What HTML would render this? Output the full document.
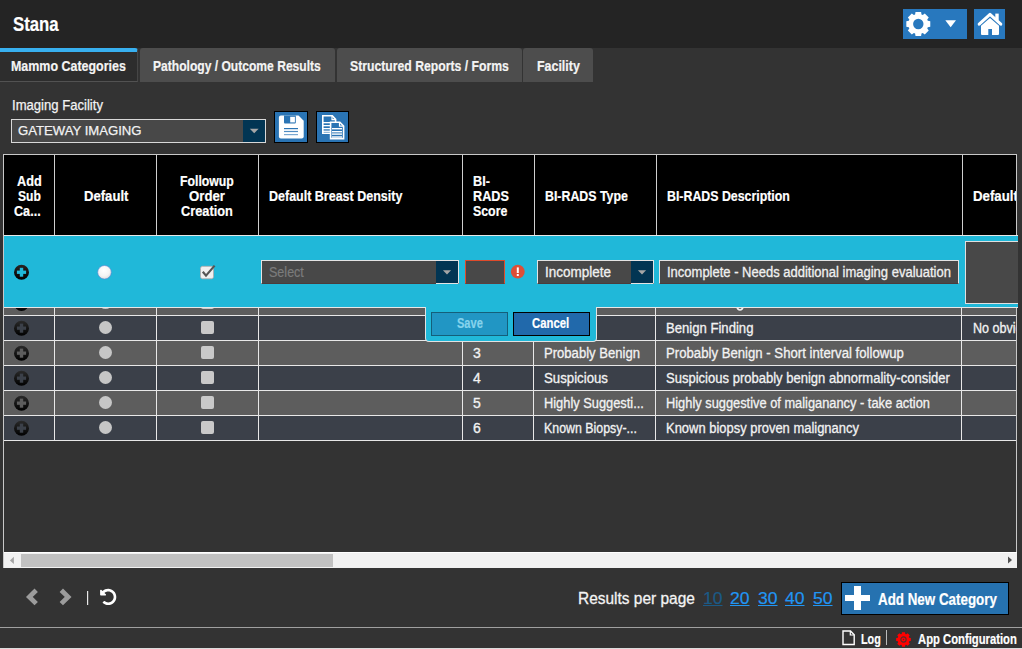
<!DOCTYPE html>
<html><head><meta charset="utf-8">
<style>
*{margin:0;padding:0;box-sizing:border-box}
html,body{width:1022px;height:649px;overflow:hidden;background:#333333;font-family:"Liberation Sans",sans-serif}
.a{position:absolute}
.t{position:absolute;white-space:nowrap;line-height:1;transform-origin:0 0;font-family:"Liberation Sans",sans-serif}
.hl{position:absolute;height:1px;background:#e8e8e8}
.vl{position:absolute;width:1px;background:#e8e8e8}
.radio{position:absolute;width:13px;height:13px;border-radius:50%;background:#c6c6c6}
.chk{position:absolute;width:13px;height:13px;border-radius:2px;background:#c9c9c9}
.plus{position:absolute;width:15px;height:15px}
</style></head><body>
<!-- header -->
<div class="a" style="left:0;top:0;width:1022px;height:48px;background:#242424"></div>
<div class="a" style="left:903px;top:9px;width:64px;height:30px;background:#2878be"></div>
<svg class="a" style="left:903px;top:9px" width="64" height="30" viewBox="0 0 64 30">
  <path fill="#fff" fill-rule="evenodd" d="M12.10,5.53 L12.50,3.02 L18.10,3.02 L18.50,5.53 L19.74,6.04 L21.79,4.55 L25.75,8.51 L24.26,10.56 L24.77,11.80 L27.28,12.20 L27.28,17.80 L24.77,18.20 L24.26,19.44 L25.75,21.49 L21.79,25.45 L19.74,23.96 L18.50,24.47 L18.10,26.98 L12.50,26.98 L12.10,24.47 L10.86,23.96 L8.81,25.45 L4.85,21.49 L6.34,19.44 L5.83,18.20 L3.32,17.80 L3.32,12.20 L5.83,11.80 L6.34,10.56 L4.85,8.51 L8.81,4.55 L10.86,6.04 Z M15.30,9.80 A5.2,5.2 0 1 0 15.30,20.20 A5.2,5.2 0 1 0 15.30,9.80 Z"/>
  <path d="M42.3,11.2 L53,11.2 L47.65,18.3 Z" fill="#fff"/>
</svg>
<div class="a" style="left:974px;top:9px;width:31px;height:30px;background:#2878be"></div>
<svg class="a" style="left:974px;top:9px" width="31" height="30" viewBox="0 0 31 30">
  <path d="M5.2,15.2 L16,5.4 L26.8,15.2" fill="none" stroke="#fff" stroke-width="3" stroke-linecap="round" stroke-linejoin="round"/>
  <rect x="21.3" y="4.6" width="3.4" height="6.5" fill="#fff"/>
  <path d="M7,16.8 L16,8.9 L25,16.8 L25,25 Q25,26 24,26 L18,26 L18,20 L14.3,20 L14.3,26 L8,26 Q7,26 7,25 Z" fill="#fff"/>
</svg>

<!-- tabs -->
<div class="a" style="left:0;top:48px;width:138px;height:34px;background:#2d2d2d;border-top:4px solid #38b0f0;border-right:1px solid #464646;border-bottom:1px solid #525252;border-radius:0 3px 0 0"></div>
<div class="a" style="left:140px;top:48px;width:195px;height:34px;background:#4d4d4d;border-radius:3px 3px 0 0"></div>
<div class="a" style="left:337px;top:48px;width:185px;height:34px;background:#4d4d4d;border-radius:3px 3px 0 0"></div>
<div class="a" style="left:523px;top:48px;width:70px;height:34px;background:#4d4d4d;border-radius:3px 3px 0 0"></div>

<!-- facility select -->
<div class="a" style="left:11px;top:119px;width:255px;height:24px;background:#484848;border:1px solid #d8d8d8"></div>
<div class="a" style="left:243px;top:120px;width:22px;height:22px;background:#023553"></div>
<svg class="a" style="left:243px;top:120px" width="22" height="22"><path d="M6.8,8.8 L15.6,8.8 L11.2,13.3 Z" fill="#a6a6a6"/></svg>
<!-- save btn -->
<div class="a" style="left:274px;top:111px;width:34px;height:32px;background:#2a74b4;border:1px solid #000"></div>
<svg class="a" style="left:274px;top:111px" width="34" height="32" viewBox="0 0 34 32">
  <path d="M6.9,4.6 L24.5,4.6 L29.7,9.8 L29.7,25.5 Q29.7,27.5 27.7,27.5 L6.9,27.5 Q4.9,27.5 4.9,25.5 L4.9,6.6 Q4.9,4.6 6.9,4.6 Z" fill="#fff"/>
  <path d="M10,4.6 L21.8,4.6 L21.8,11.5 Q21.8,12.5 20.8,12.5 L11,12.5 Q10,12.5 10,11.5 Z" fill="#2a74b4"/>
  <rect x="16.2" y="5.8" width="4.7" height="5.6" fill="#fff"/>
  <rect x="10" y="17" width="14" height="1.2" fill="#2a74b4"/>
  <rect x="10" y="19.9" width="14" height="1.2" fill="#4f8cc2"/>
  <rect x="10" y="23" width="14" height="1.2" fill="#7aa8d2"/>
</svg>
<!-- copy btn -->
<div class="a" style="left:316px;top:111px;width:33px;height:32px;background:#2a74b4;border:1px solid #000"></div>
<svg class="a" style="left:316px;top:111px" width="33" height="32" viewBox="0 0 33 32">
  <path d="M6.8,4.8 L16.3,4.8 L19.6,8.4 L19.6,22.3 L6.8,22.3 Z" fill="#2a74b4" stroke="#fff" stroke-width="1.6"/>
  <path d="M16,4.8 L16,8.6 L19.6,8.6" fill="none" stroke="#fff" stroke-width="1.2"/>
  <rect x="7" y="11" width="7" height="1.3" fill="#fff"/>
  <rect x="7" y="14" width="7" height="1.3" fill="#fff"/>
  <rect x="7" y="17" width="7" height="1.3" fill="#fff"/>
  <rect x="7" y="19.6" width="7" height="1.3" fill="#fff"/>
  <path d="M14.6,11.2 L23.8,11.2 L27.6,15 L27.6,27.6 L14.6,27.6 Z" fill="#2a74b4" stroke="#fff" stroke-width="1.6"/>
  <path d="M23.5,11.2 L23.5,15.2 L27.6,15.2" fill="none" stroke="#fff" stroke-width="1.2"/>
  <rect x="16" y="17" width="10" height="1.4" fill="#fff"/>
  <rect x="16" y="20" width="10" height="1.4" fill="#fff"/>
  <rect x="16" y="22.4" width="10" height="1.4" fill="#fff"/>
  <rect x="16" y="25.3" width="10" height="1.4" fill="#fff"/>
</svg>

<!-- table container -->
<div class="a" style="left:3px;top:154px;width:1014px;height:414px;border:1px solid #c8c8c8;background:#333"></div>
<div class="a" style="left:4px;top:155px;width:1012px;height:80px;background:#000"></div>
<div class="hl" style="left:4px;top:235px;width:1014px"></div>
<!-- header col lines -->
<div class="vl" style="left:54px;top:155px;height:80px;background:#cfcfcf"></div>
<div class="vl" style="left:156px;top:155px;height:80px;background:#cfcfcf"></div>
<div class="vl" style="left:258px;top:155px;height:80px;background:#cfcfcf"></div>
<div class="vl" style="left:462px;top:155px;height:80px;background:#cfcfcf"></div>
<div class="vl" style="left:534px;top:155px;height:80px;background:#cfcfcf"></div>
<div class="vl" style="left:656px;top:155px;height:80px;background:#cfcfcf"></div>
<div class="vl" style="left:962px;top:155px;height:80px;background:#cfcfcf"></div>

<!-- body rows -->
<div class="a" style="left:4px;top:308px;width:1012px;height:7px;background:#5d5d5d"></div>
<div class="a" style="left:4px;top:316px;width:1012px;height:24px;background:#3b4049"></div>
<div class="a" style="left:4px;top:341px;width:1012px;height:24px;background:#5d5d5d"></div>
<div class="a" style="left:4px;top:366px;width:1012px;height:24px;background:#3b4049"></div>
<div class="a" style="left:4px;top:391px;width:1012px;height:24px;background:#5d5d5d"></div>
<div class="a" style="left:4px;top:416px;width:1012px;height:24px;background:#3b4049"></div>

<div class="hl" style="left:4px;top:315px;width:1012px"></div>
<div class="hl" style="left:4px;top:340px;width:1012px"></div>
<div class="hl" style="left:4px;top:365px;width:1012px"></div>
<div class="hl" style="left:4px;top:390px;width:1012px"></div>
<div class="hl" style="left:4px;top:415px;width:1012px"></div>
<div class="hl" style="left:4px;top:440px;width:1012px"></div>
<div class="vl" style="left:54px;top:308px;height:132px"></div>
<div class="vl" style="left:156px;top:308px;height:132px"></div>
<div class="vl" style="left:258px;top:308px;height:132px"></div>
<div class="vl" style="left:462px;top:308px;height:132px"></div>
<div class="vl" style="left:533px;top:308px;height:132px"></div>
<div class="vl" style="left:655px;top:308px;height:132px"></div>
<div class="vl" style="left:961px;top:308px;height:132px"></div>

<!-- row icons -->
<svg class="a" style="left:0;top:300px" width="230" height="145" viewBox="0 300 230 145">
  <defs>
    <linearGradient id="pg" x1="0" y1="0" x2="0" y2="1"><stop offset="0" stop-color="#2a2a2a"/><stop offset="1" stop-color="#000"/></linearGradient>
  </defs>
  <g id="prow">
    <circle cx="21.5" cy="303.5" r="7.5" fill="url(#pg)"/>
  </g>
  <g>
    <circle cx="21.5" cy="328.2" r="7.5" fill="url(#pg)"/>
    <circle cx="21.5" cy="353.2" r="7.5" fill="url(#pg)"/>
    <circle cx="21.5" cy="378.2" r="7.5" fill="url(#pg)"/>
    <circle cx="21.5" cy="403.2" r="7.5" fill="url(#pg)"/>
    <circle cx="21.5" cy="428.2" r="7.5" fill="url(#pg)"/>
  </g>
  <g fill="#5d5d5d">
    <rect x="16.9" y="351.5" width="9.2" height="3.3"/><rect x="19.8" y="348.6" width="3.4" height="9.1"/>
    <rect x="16.9" y="401.5" width="9.2" height="3.3"/><rect x="19.8" y="398.6" width="3.4" height="9.1"/>
  </g>
  <g fill="#3b4049">
    <rect x="16.9" y="326.5" width="9.2" height="3.3"/><rect x="19.8" y="323.6" width="3.4" height="9.1"/>
    <rect x="16.9" y="376.5" width="9.2" height="3.3"/><rect x="19.8" y="373.6" width="3.4" height="9.1"/>
    <rect x="16.9" y="426.5" width="9.2" height="3.3"/><rect x="19.8" y="423.6" width="3.4" height="9.1"/>
  </g>
  <g fill="#c6c6c6">
    <circle cx="105.5" cy="302.6" r="6.5"/>
    <circle cx="105.5" cy="327.5" r="6.5"/>
    <circle cx="105.5" cy="352.5" r="6.5"/>
    <circle cx="105.5" cy="377.5" r="6.5"/>
    <circle cx="105.5" cy="402.5" r="6.5"/>
    <circle cx="105.5" cy="427.5" r="6.5"/>
  </g>
  <g fill="#c9c9c9">
    <rect x="201" y="296" width="13" height="13" rx="2"/>
    <rect x="201" y="321" width="13" height="13" rx="2"/>
    <rect x="201" y="346" width="13" height="13" rx="2"/>
    <rect x="201" y="371" width="13" height="13" rx="2"/>
    <rect x="201" y="396" width="13" height="13" rx="2"/>
    <rect x="201" y="421" width="13" height="13" rx="2"/>
  </g>
</svg>

<svg class="a" style="left:730px;top:304px" width="20" height="10" viewBox="730 304 20 10"><path d="M736.8,306.5 Q737.5,310 740,310 Q742.5,310 743.2,306.5" fill="none" stroke="#f0f0f0" stroke-width="1.5"/></svg>
<!-- edit row -->
<div class="a" style="left:4px;top:236px;width:1014px;height:71px;background:#20b8d9"></div>
<div class="hl" style="left:4px;top:307px;width:1014px"></div>
<svg class="a" style="left:0;top:236px" width="230" height="71" viewBox="0 236 230 71">
  <defs>
    <linearGradient id="pg2" x1="0" y1="0" x2="0" y2="1"><stop offset="0" stop-color="#2a2424"/><stop offset="1" stop-color="#000"/></linearGradient>
    <radialGradient id="rg" cx="0.45" cy="0.35" r="0.7"><stop offset="0" stop-color="#ffffff"/><stop offset="0.6" stop-color="#f4f4f4"/><stop offset="1" stop-color="#d8d8d8"/></radialGradient>
  </defs>
  <circle cx="21.5" cy="272.3" r="7.5" fill="url(#pg2)"/>
  <rect x="16.9" y="270.6" width="9.2" height="3.3" fill="#20b8d9"/><rect x="19.8" y="267.8" width="3.4" height="8.9" fill="#20b8d9"/>
  <circle cx="104.5" cy="272.3" r="6.8" fill="url(#rg)" stroke="#5a7fd0" stroke-width="0.6"/>
  <rect x="200.5" y="266.3" width="13" height="12.5" rx="2" fill="#f0f0f0" stroke="#b0a8a8" stroke-width="0.8"/>
  <path d="M202.8,271.8 L206,275.6 L214.6,265.6" fill="none" stroke="#555" stroke-width="2.2"/>
</svg>
<!-- density select -->
<div class="a" style="left:261px;top:260px;width:198px;height:24px;background:#484848;border:1px solid #e4e4e4;border-bottom-color:#4a3c3c"></div>
<div class="a" style="left:436px;top:261px;width:22px;height:23px;background:#023553;border-bottom:1px solid #e4e4e4"></div>
<svg class="a" style="left:436px;top:261px" width="22" height="22"><path d="M6.9,9.2 L15.1,9.2 L11,13.4 Z" fill="#a6a6a6"/></svg>
<!-- score input -->
<div class="a" style="left:465px;top:260px;width:40px;height:24px;background:#484848;border:1px solid #e04a2a;border-bottom-color:#5a4040"></div>
<svg class="a" style="left:510px;top:264px" width="16" height="16" viewBox="0 0 16 16">
  <circle cx="7.8" cy="7.7" r="6.9" fill="#dc4e37"/>
  <rect x="6.8" y="3.4" width="2" height="5.6" fill="#fff"/>
  <rect x="6.8" y="10" width="2" height="2" fill="#fff"/>
</svg>
<!-- type select -->
<div class="a" style="left:537px;top:260px;width:117px;height:24px;background:#484848;border:1px solid #e4e4e4;border-bottom-color:#4a3c3c"></div>
<div class="a" style="left:631px;top:261px;width:22px;height:23px;background:#023553;border-bottom:1px solid #e4e4e4"></div>
<svg class="a" style="left:631px;top:261px" width="22" height="22"><path d="M6.9,9.2 L15.1,9.2 L11,13.4 Z" fill="#a6a6a6"/></svg>
<!-- desc input -->
<div class="a" style="left:659px;top:260px;width:300px;height:24px;background:#484848;border:1px solid #e4e4e4;border-bottom-color:#4a3c3c"></div>
<!-- default textarea -->
<div class="a" style="left:965px;top:241px;width:53px;height:63px;background:#484848;border:1px solid #e0e0e0;border-right:0"></div>

<!-- popup -->
<div class="a" style="left:425px;top:307px;width:172px;height:35px;background:#20b8d9;border:1px solid #e2e2e2;border-top:0;border-radius:0 0 4px 4px"></div>
<div class="a" style="left:431px;top:312px;width:77px;height:24px;background:#2196c4;border:1px solid #145f7a"></div>
<div class="a" style="left:513px;top:312px;width:77px;height:24px;background:#2169ab;border:1px solid #000"></div>

<!-- scrollbar -->
<div class="a" style="left:4px;top:552px;width:1013px;height:16px;background:#f1f1f1;border-top:1px solid #fff"></div>
<div class="a" style="left:21px;top:554px;width:312px;height:13px;background:#c1c1c1"></div>
<svg class="a" style="left:4px;top:552px" width="16" height="16"><path d="M9.9,4.8 L9.9,12 L5.9,8.4 Z" fill="#a3a3a3"/></svg>
<svg class="a" style="left:1001px;top:552px" width="16" height="16"><path d="M7,4.6 L7,11.6 L11,8.1 Z" fill="#505050"/></svg>

<!-- pagination -->
<svg class="a" style="left:0;top:560px" width="140" height="60" viewBox="0 560 140 60">
  <path d="M36.2,590.2 L29.4,596.9 L36.2,603.6" fill="none" stroke="#9c9c9c" stroke-width="4.8" stroke-linecap="butt" stroke-linejoin="miter"/>
  <path d="M61.3,590.2 L68.1,596.9 L61.3,603.6" fill="none" stroke="#9c9c9c" stroke-width="4.8" stroke-linecap="butt" stroke-linejoin="miter"/>
  <rect x="87" y="591" width="1.2" height="14" fill="#e8e8e8"/>
  <g transform="translate(99.84,588.54) scale(0.03266)">
    <path fill="#fff" d="M255.545 8c-66.269.119-126.438 26.233-170.86 68.685L48.971 40.971C33.851 25.851 8 36.559 8 57.941V192c0 13.255 10.745 24 24 24h134.059c21.382 0 32.09-25.851 16.971-40.971l-41.75-41.75c30.864-28.899 70.801-44.907 113.23-45.273 92.398-.798 170.283 73.977 169.484 169.442C423.236 348.009 349.816 424 256 424c-41.127 0-79.997-14.678-110.63-41.556-4.743-4.161-11.906-3.908-16.368.553L89.34 422.659c-4.872 4.872-4.631 12.815.482 17.433C133.798 479.813 192.074 504 256 504c136.966 0 247.999-111.033 248-247.998C504.001 119.193 392.354 7.755 255.545 8z"/>
  </g>
</svg>
<!-- add new category -->
<div class="a" style="left:841px;top:582px;width:168px;height:33px;background:#2672b0;border:1px solid #000"></div>
<div class="a" style="left:845px;top:594.6px;width:25px;height:6.8px;background:#fff"></div>
<div class="a" style="left:854.1px;top:586px;width:6.8px;height:24px;background:#fff"></div>

<!-- status bar -->
<div class="a" style="left:0;top:648px;width:1022px;height:1px;background:#dcdcdc"></div>
<div class="a" style="left:0;top:627px;width:1022px;height:1px;background:#a0a0a0"></div>
<svg class="a" style="left:840px;top:628px" width="20" height="20" viewBox="840 628 20 20">
  <path d="M843,631 L850.5,631 L854.2,634.7 L854.2,644.5 L843,644.5 Z" fill="none" stroke="#fff" stroke-width="1.4"/>
  <path d="M850.3,631 L850.3,635 L854.2,635" fill="none" stroke="#fff" stroke-width="1.2"/>
</svg>
<div class="a" style="left:886px;top:630px;width:1px;height:15px;background:#bbb"></div>
<svg class="a" style="left:894px;top:629px" width="20" height="20" viewBox="0 0 20 20">
  <path fill="#ff0000" d="M7.70,4.88 L8.00,3.15 L11.00,3.15 L11.30,4.88 L12.20,5.25 L13.64,4.24 L15.76,6.36 L14.75,7.80 L15.12,8.70 L16.85,9.00 L16.85,12.00 L15.12,12.30 L14.75,13.20 L15.76,14.64 L13.64,16.76 L12.20,15.75 L11.30,16.12 L11.00,17.85 L8.00,17.85 L7.70,16.12 L6.80,15.75 L5.36,16.76 L3.24,14.64 L4.25,13.20 L3.88,12.30 L2.15,12.00 L2.15,9.00 L3.88,8.70 L4.25,7.80 L3.24,6.36 L5.36,4.24 L6.80,5.25 Z"/>
  <circle cx="9.5" cy="10.5" r="2.65" fill="none" stroke="#5a2a2a" stroke-width="1.1"/>
  <circle cx="9.5" cy="10.5" r="0.7" fill="#5a2a2a"/>
</svg>

<span class="t" style="left:12.50px;top:14.46px;font-size:20.4px;font-weight:bold;color:#ffffff;transform:scaleX(0.8215);-webkit-text-stroke:0.2px #fff;">Stana</span>
<span class="t" style="left:11.00px;top:58.15px;font-size:15px;font-weight:bold;color:#f4f4f4;transform:scaleX(0.8298);-webkit-text-stroke:0.2px #f4f4f4;">Mammo Categories</span>
<span class="t" style="left:153.30px;top:58.15px;font-size:15px;font-weight:bold;color:#f4f4f4;transform:scaleX(0.8053);-webkit-text-stroke:0.2px #f4f4f4;">Pathology / Outcome Results</span>
<span class="t" style="left:349.50px;top:58.15px;font-size:15px;font-weight:bold;color:#f4f4f4;transform:scaleX(0.8143);-webkit-text-stroke:0.2px #f4f4f4;">Structured Reports / Forms</span>
<span class="t" style="left:536.50px;top:58.15px;font-size:15px;font-weight:bold;color:#f4f4f4;transform:scaleX(0.8286);-webkit-text-stroke:0.2px #f4f4f4;">Facility</span>
<span class="t" style="left:11.50px;top:98.40px;font-size:14.0px;color:#f4f4f4;transform:scaleX(0.9349);-webkit-text-stroke:0.25px #f0f0f0;">Imaging Facility</span>
<span class="t" style="left:18.40px;top:124.21px;font-size:13.4px;color:#f4f4f4;transform:scaleX(0.9809);-webkit-text-stroke:0.25px #f0f0f0;">GATEWAY IMAGING</span>
<span class="t" style="left:17.10px;top:173.76px;font-size:14.4px;font-weight:bold;color:#fff;transform:scaleX(0.8820);-webkit-text-stroke:0.2px #fff;">Add</span>
<span class="t" style="left:18.00px;top:188.76px;font-size:14.4px;font-weight:bold;color:#fff;transform:scaleX(0.8401);-webkit-text-stroke:0.2px #fff;">Sub</span>
<span class="t" style="left:14.40px;top:203.76px;font-size:14.4px;font-weight:bold;color:#fff;transform:scaleX(0.8778);-webkit-text-stroke:0.2px #fff;">Ca...</span>
<span class="t" style="left:83.75px;top:189.06px;font-size:14.4px;font-weight:bold;color:#fff;transform:scaleX(0.9104);-webkit-text-stroke:0.2px #fff;">Default</span>
<span class="t" style="left:180.10px;top:173.76px;font-size:14.4px;font-weight:bold;color:#fff;transform:scaleX(0.8527);-webkit-text-stroke:0.2px #fff;">Followup</span>
<span class="t" style="left:189.10px;top:188.76px;font-size:14.4px;font-weight:bold;color:#fff;transform:scaleX(0.9162);-webkit-text-stroke:0.2px #fff;">Order</span>
<span class="t" style="left:181.10px;top:203.76px;font-size:14.4px;font-weight:bold;color:#fff;transform:scaleX(0.8889);-webkit-text-stroke:0.2px #fff;">Creation</span>
<span class="t" style="left:268.80px;top:189.06px;font-size:14.4px;font-weight:bold;color:#fff;transform:scaleX(0.8685);-webkit-text-stroke:0.2px #fff;">Default Breast Density</span>
<span class="t" style="left:472.50px;top:173.76px;font-size:14.4px;font-weight:bold;color:#fff;transform:scaleX(0.8797);-webkit-text-stroke:0.2px #fff;">BI-</span>
<span class="t" style="left:472.50px;top:188.76px;font-size:14.4px;font-weight:bold;color:#fff;transform:scaleX(0.8798);-webkit-text-stroke:0.2px #fff;">RADS</span>
<span class="t" style="left:472.50px;top:203.76px;font-size:14.4px;font-weight:bold;color:#fff;transform:scaleX(0.8590);-webkit-text-stroke:0.2px #fff;">Score</span>
<span class="t" style="left:544.50px;top:189.06px;font-size:14.4px;font-weight:bold;color:#fff;transform:scaleX(0.8588);-webkit-text-stroke:0.2px #fff;">BI-RADS Type</span>
<span class="t" style="left:666.60px;top:189.06px;font-size:14.4px;font-weight:bold;color:#fff;transform:scaleX(0.8584);-webkit-text-stroke:0.2px #fff;">BI-RADS Description</span>
<div class="a" style="left:0;top:0;width:1016px;height:649px;overflow:hidden"><span class="t" style="left:972.50px;top:189.06px;font-size:14.4px;font-weight:bold;color:#fff;transform:scaleX(0.9209);-webkit-text-stroke:0.2px #fff;">Default</span></div>
<span class="t" style="left:269.30px;top:264.79px;font-size:14.6px;color:#7c7c7c;transform:scaleX(0.8594);-webkit-text-stroke:0.2px #7c7c7c;">Select</span>
<span class="t" style="left:544.90px;top:265.30px;font-size:14px;color:#f0f0f0;transform:scaleX(0.9632);-webkit-text-stroke:0.3px #f0f0f0;">Incomplete</span>
<span class="t" style="left:667.20px;top:265.30px;font-size:14px;color:#f0f0f0;transform:scaleX(0.9283);-webkit-text-stroke:0.3px #f0f0f0;">Incomplete - Needs additional imaging evaluation</span>
<span class="t" style="left:456.50px;top:317.27px;font-size:13.8px;font-weight:bold;color:#86d3ec;transform:scaleX(0.8004);-webkit-text-stroke:0.2px #86d3ec;">Save</span>
<span class="t" style="left:532.20px;top:317.27px;font-size:13.8px;font-weight:bold;color:#ffffff;transform:scaleX(0.8203);-webkit-text-stroke:0.2px #fff;">Cancel</span>
<span class="t" style="left:666.00px;top:321.30px;font-size:14.0px;color:#f4f4f4;transform:scaleX(0.9361);-webkit-text-stroke:0.3px #f0f0f0;">Benign Finding</span>
<div class="a" style="left:0;top:0;width:1016px;height:649px;overflow:hidden"><span class="t" style="left:973.00px;top:321.30px;font-size:14.0px;color:#f4f4f4;transform:scaleX(0.8979);-webkit-text-stroke:0.3px #f0f0f0;">No obvious</span></div>
<span class="t" style="left:473.00px;top:346.30px;font-size:14.0px;color:#f4f4f4;-webkit-text-stroke:0.3px #f0f0f0;">3</span>
<span class="t" style="left:544.20px;top:346.30px;font-size:14.0px;color:#f4f4f4;transform:scaleX(0.9337);-webkit-text-stroke:0.3px #f0f0f0;">Probably Benign</span>
<span class="t" style="left:666.00px;top:346.30px;font-size:14.0px;color:#f4f4f4;transform:scaleX(0.9408);-webkit-text-stroke:0.3px #f0f0f0;">Probably Benign - Short interval followup</span>
<span class="t" style="left:473.00px;top:371.30px;font-size:14.0px;color:#f4f4f4;-webkit-text-stroke:0.3px #f0f0f0;">4</span>
<span class="t" style="left:544.20px;top:371.30px;font-size:14.0px;color:#f4f4f4;transform:scaleX(0.9445);-webkit-text-stroke:0.3px #f0f0f0;">Suspicious</span>
<span class="t" style="left:666.00px;top:371.30px;font-size:14.0px;color:#f4f4f4;transform:scaleX(0.9307);-webkit-text-stroke:0.3px #f0f0f0;">Suspicious probably benign abnormality-consider</span>
<span class="t" style="left:473.00px;top:396.30px;font-size:14.0px;color:#f4f4f4;-webkit-text-stroke:0.3px #f0f0f0;">5</span>
<span class="t" style="left:544.20px;top:396.30px;font-size:14.0px;color:#f4f4f4;transform:scaleX(0.9171);-webkit-text-stroke:0.3px #f0f0f0;">Highly Suggesti...</span>
<span class="t" style="left:666.00px;top:396.30px;font-size:14.0px;color:#f4f4f4;transform:scaleX(0.9166);-webkit-text-stroke:0.3px #f0f0f0;">Highly suggestive of maliganancy - take action</span>
<span class="t" style="left:473.00px;top:421.30px;font-size:14.0px;color:#f4f4f4;-webkit-text-stroke:0.3px #f0f0f0;">6</span>
<span class="t" style="left:544.20px;top:421.30px;font-size:14.0px;color:#f4f4f4;transform:scaleX(0.8841);-webkit-text-stroke:0.3px #f0f0f0;">Known Biopsy-...</span>
<span class="t" style="left:666.00px;top:421.30px;font-size:14.0px;color:#f4f4f4;transform:scaleX(0.9250);-webkit-text-stroke:0.3px #f0f0f0;">Known biopsy proven malignancy</span>
<span class="t" style="left:577.50px;top:590.18px;font-size:17.2px;color:#f4f4f4;transform:scaleX(0.8996);-webkit-text-stroke:0.3px #f4f4f4;">Results per page</span>
<span class="t" style="left:702.90px;top:590.28px;font-size:17.2px;color:#1b5a86;transform:scaleX(1.0207);text-decoration:underline;-webkit-text-stroke:0.2px #1b5a86;">10</span>
<span class="t" style="left:729.90px;top:590.28px;font-size:17.2px;color:#2196f3;transform:scaleX(1.0207);text-decoration:underline;-webkit-text-stroke:0.2px #2196f3;">20</span>
<span class="t" style="left:757.50px;top:590.28px;font-size:17.2px;color:#2196f3;transform:scaleX(1.0207);text-decoration:underline;-webkit-text-stroke:0.2px #2196f3;">30</span>
<span class="t" style="left:785.40px;top:590.28px;font-size:17.2px;color:#2196f3;transform:scaleX(1.0207);text-decoration:underline;-webkit-text-stroke:0.2px #2196f3;">40</span>
<span class="t" style="left:812.50px;top:590.28px;font-size:17.2px;color:#2196f3;transform:scaleX(1.0207);text-decoration:underline;-webkit-text-stroke:0.2px #2196f3;">50</span>
<span class="t" style="left:877.50px;top:591.57px;font-size:15.8px;font-weight:bold;color:#ffffff;transform:scaleX(0.8463);-webkit-text-stroke:0.2px #fff;">Add New Category</span>
<span class="t" style="left:860.50px;top:631.93px;font-size:14.2px;font-weight:bold;color:#ffffff;transform:scaleX(0.7600);-webkit-text-stroke:0.2px #fff;">Log</span>
<span class="t" style="left:917.50px;top:631.93px;font-size:14.2px;font-weight:bold;color:#ffffff;transform:scaleX(0.7934);-webkit-text-stroke:0.2px #fff;">App Configuration</span>
</body></html>
